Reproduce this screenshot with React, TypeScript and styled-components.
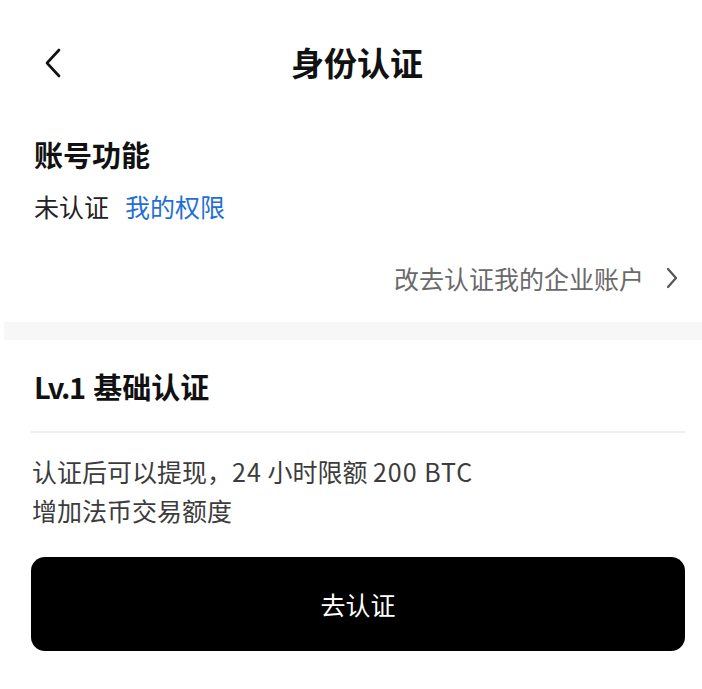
import React from 'react';
import styled, { createGlobalStyle } from 'styled-components';

const GlobalStyle = createGlobalStyle`
  html, body {
    margin: 0;
    padding: 0;
    background: #ffffff;
  }
  body {
    font-family: 'Noto Sans CJK SC', 'Noto Sans', sans-serif;
    color: #111111;
    -webkit-font-smoothing: antialiased;
  }
`;

const Page = styled.div`
  width: 702px;
  min-height: 689px;
  background: #ffffff;
  display: flex;
  flex-direction: column;
`;

const Header = styled.header`
  height: 126px;
  display: grid;
  grid-template-columns: 1fr auto 1fr;
  align-items: center;
  padding: 0 32px 0 44px;
  box-sizing: border-box;
`;

const BackButton = styled.button`
  width: 20px;
  height: 30px;
  padding: 0;
  border: 0;
  background: transparent;
  display: flex;
  align-items: center;
  justify-self: start;
  cursor: pointer;
`;

const Title = styled.h1`
  margin: 0 0 2px 0;
  font-size: 33px;
  font-weight: 600;
  line-height: 40px;
  color: #111111;
`;

const Section = styled.section`
  padding: 0 17px 0 31px;
  display: flex;
  flex-direction: column;
`;

const SectionTitle = styled.h2<{ $top: number }>`
  margin: ${(p) => p.$top}px 0 0 3px;
  font-size: 29px;
  font-weight: 700;
  line-height: 40px;
  color: #111111;
`;

const Level = styled.span`
  letter-spacing: -1.5px;
  margin-right: 2px;
`;

const StatusRow = styled.div`
  margin: 14px 0 0 3px;
  display: flex;
  gap: 16px;
  font-size: 25px;
  line-height: 36px;
  color: #222222;
`;

const Link = styled.a`
  color: #1f6fd6;
  text-decoration: none;
`;

const EnterpriseRow = styled.a`
  margin: 36px 7px 0 0;
  align-self: flex-end;
  display: flex;
  align-items: center;
  gap: 22px;
  font-size: 25px;
  line-height: 36px;
  color: #6a6a6a;
  text-decoration: none;
`;

const Band = styled.div`
  margin: 26px 0 0 4px;
  height: 18px;
  background: #f7f7f7;
`;

const Divider = styled.div`
  margin-top: 25px;
  height: 2px;
  background: #eeeeee;
`;

const Desc = styled.p`
  margin: 19px 0 0 1px;
  font-size: 25px;
  line-height: 39px;
  color: #3c3c3c;
`;

const Latin = styled.span`
  letter-spacing: 1px;
`;

const PrimaryButton = styled.button`
  margin-top: 27px;
  height: 94px;
  border: 0;
  border-radius: 14px;
  background: #000000;
  color: #ffffff;
  font-family: 'Noto Sans CJK SC', 'Noto Sans', sans-serif;
  font-size: 25px;
  cursor: pointer;
`;

const App = () => {
  return (
    <Page>
      <GlobalStyle />
      <Header>
        <BackButton aria-label="返回">
          <svg width="18" height="30" viewBox="0 0 18 30" fill="none">
            <path
              d="M15 2 L3 15 L15 28"
              stroke="#111"
              strokeWidth="2.6"
              strokeLinecap="round"
              strokeLinejoin="round"
            />
          </svg>
        </BackButton>
        <Title>身份认证</Title>
        <span />
      </Header>

      <Section>
        <SectionTitle $top={8}>账号功能</SectionTitle>
        <StatusRow>
          <span>未认证</span>
          <Link>我的权限</Link>
        </StatusRow>
        <EnterpriseRow>
          改去认证我的企业账户
          <svg width="12" height="22" viewBox="0 0 12 22" fill="none">
            <path
              d="M2 2 L10 11 L2 20"
              stroke="#555"
              strokeWidth="2.2"
              strokeLinecap="round"
              strokeLinejoin="round"
            />
          </svg>
        </EnterpriseRow>
      </Section>

      <Band />

      <Section>
        <SectionTitle $top={26}>
          <Level>Lv.1</Level> 基础认证
        </SectionTitle>
        <Divider />
        <Desc>
          认证后可以提现，<Latin>24</Latin> 小时限额 <Latin>200 BTC</Latin>
          <br />
          增加法币交易额度
        </Desc>
        <PrimaryButton>去认证</PrimaryButton>
      </Section>
    </Page>
  );
};

export default App;
